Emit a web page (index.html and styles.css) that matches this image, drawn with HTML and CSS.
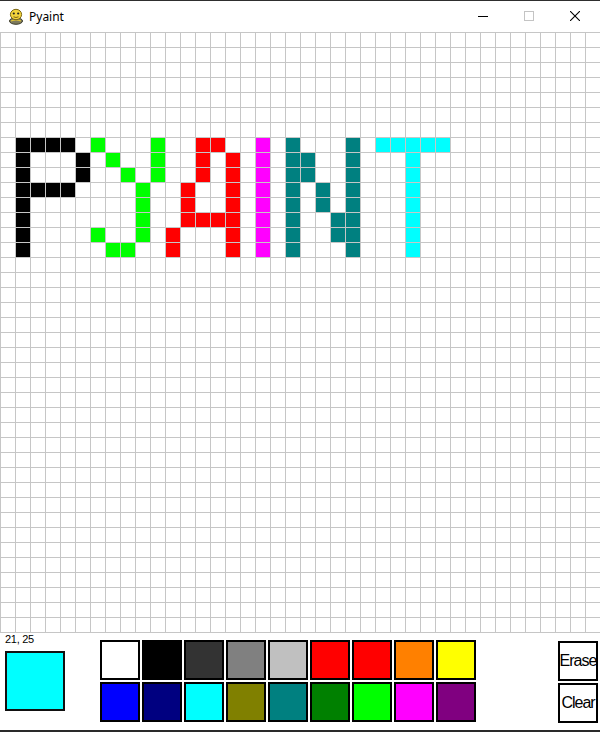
FILE: index.html
```html
<!DOCTYPE html>
<html>
<head>
<meta charset="utf-8">
<title>Pyaint</title>
<link rel="stylesheet" href="styles.css">
</head>
<body>
<div class="window">
  <div class="titlebar">
    <svg class="app-icon" width="16" height="17" viewBox="0 0 16 17">
      <ellipse cx="8" cy="13" rx="6.5" ry="3.3" fill="#7d7a5c" stroke="#3a3a2a" stroke-width="1"/>
      <path d="M3 13 q5 -2 10 0" stroke="#e8c832" stroke-width="1.2" fill="none"/>
      <ellipse cx="8" cy="6.5" rx="5.6" ry="5.2" fill="#f3d43c" stroke="#7a6512" stroke-width="1"/>
      <circle cx="5.8" cy="5.5" r="1.1" fill="#222"/>
      <circle cx="10.2" cy="5.5" r="1.1" fill="#222"/>
      <path d="M5.5 8.8 q2.5 1.4 5 0" stroke="#6b5410" stroke-width="0.9" fill="none"/>
    </svg>
    <span class="title">Pyaint</span>
    <div class="caption">
      <div class="cap-btn">
        <svg width="10" height="10" viewBox="0 0 10 10"><path d="M0 5.5 H10" stroke="#000" stroke-width="1"/></svg>
      </div>
      <div class="cap-btn">
        <svg width="10" height="10" viewBox="0 0 10 10"><rect x="0.5" y="0.5" width="9" height="9" fill="none" stroke="#c4c4c4" stroke-width="1"/></svg>
      </div>
      <div class="cap-btn">
        <svg width="10" height="10" viewBox="0 0 10 10"><path d="M0 0 L10 10 M10 0 L0 10" stroke="#000" stroke-width="1.1"/></svg>
      </div>
    </div>
  </div>

  <div class="canvas" id="canvas"></div>

  <div class="panel">
    <div class="current">
      <div class="coords">21, 25</div>
      <div class="current-swatch"></div>
    </div>
    <div class="palette">
      <div class="sw sw-white"></div>
      <div class="sw sw-black"></div>
      <div class="sw sw-dgray"></div>
      <div class="sw sw-gray"></div>
      <div class="sw sw-silver"></div>
      <div class="sw sw-red"></div>
      <div class="sw sw-red"></div>
      <div class="sw sw-orange"></div>
      <div class="sw sw-yellow"></div>
      <div class="sw sw-blue"></div>
      <div class="sw sw-navy"></div>
      <div class="sw sw-cyan"></div>
      <div class="sw sw-olive"></div>
      <div class="sw sw-teal"></div>
      <div class="sw sw-green"></div>
      <div class="sw sw-lime"></div>
      <div class="sw sw-magenta"></div>
      <div class="sw sw-purple"></div>
    </div>
    <div class="tools">
      <div class="tool">Erase</div>
      <div class="tool">Clear</div>
    </div>
  </div>
</div>
<script src="script.js"></script>
</body>
</html>
```

FILE: styles.css
```css
* { box-sizing: border-box; }

html, body {
  margin: 0;
  padding: 0;
  background: #ffffff;
}

.window {
  width: 600px;
  height: 732px;
  overflow: hidden;
  background: #ffffff;
  font-family: "Liberation Sans", Arial, sans-serif;
}

.titlebar {
  height: 32px;
  border-top: 1px solid #2e2e2e;
  display: flex;
  align-items: center;
  padding-left: 8px;
  background: #ffffff;
}

.app-icon {
  display: block;
  margin-top: -1px;
}

.title {
  margin-left: 5px;
  font-family: "Noto Sans", "Open Sans", sans-serif;
  font-size: 12px;
  color: #000;
  margin-top: -1px;
}

.caption {
  margin-left: auto;
  display: flex;
  height: 31px;
  padding-right: 2px;
}

.cap-btn {
  width: 46px;
  height: 31px;
  display: flex;
  align-items: center;
  justify-content: center;
  padding-bottom: 2px;
}

.canvas {
  display: grid;
  grid-template-columns: repeat(40, 15px);
  grid-template-rows: repeat(40, 15px);
  width: 600px;
  height: 601px;
  border-bottom: 1px solid #c6c6c6;
}

.cell {
  border-top: 1px solid #c6c6c6;
  border-left: 1px solid #c6c6c6;
  background: #ffffff;
}

.cell.k { background: #000000; }
.cell.g { background: #00ff00; }
.cell.r { background: #ff0000; }
.cell.m { background: #ff00ff; }
.cell.t { background: #008080; }
.cell.c { background: #00ffff; }

.panel {
  height: 99px;
  border-bottom: 2px solid #2a2a2a;
  display: flex;
  align-items: flex-start;
  padding-left: 5px;
  padding-right: 2px;
}

.current {
  width: 60px;
  display: flex;
  flex-direction: column;
}

.coords {
  font-size: 11px;
  line-height: 12px;
  letter-spacing: -0.3px;
  color: #000;
  height: 12px;
  white-space: nowrap;
}

.current-swatch {
  margin-top: 6px;
  width: 60px;
  height: 60px;
  border: 2px solid #111;
  background: #00ffff;
}

.palette {
  margin-left: 35px;
  margin-top: 7px;
  display: grid;
  grid-template-columns: repeat(9, 40px);
  grid-template-rows: repeat(2, 40px);
  gap: 2px;
}

.sw {
  border: 2px solid #000;
}

.sw-white { background: #ffffff; }
.sw-black { background: #000000; }
.sw-dgray { background: #333333; }
.sw-gray { background: #808080; }
.sw-silver { background: #c0c0c0; }
.sw-red { background: #ff0000; }
.sw-orange { background: #ff8000; }
.sw-yellow { background: #ffff00; }
.sw-blue { background: #0000ff; }
.sw-navy { background: #000080; }
.sw-cyan { background: #00ffff; }
.sw-olive { background: #808000; }
.sw-teal { background: #008080; }
.sw-green { background: #008000; }
.sw-lime { background: #00ff00; }
.sw-magenta { background: #ff00ff; }
.sw-purple { background: #800080; }

.tools {
  margin-left: auto;
  margin-top: 8px;
  display: flex;
  flex-direction: column;
  gap: 2px;
}

.tool {
  width: 40px;
  height: 40px;
  border: 2px solid #000;
  background: #fff;
  display: flex;
  align-items: center;
  justify-content: center;
  font-size: 16px;
  letter-spacing: -1px;
  color: #000;
  white-space: nowrap;
  overflow: visible;
  padding-bottom: 1px;
}
```

FILE: script.js
```js
(function () {
  var art = {
    7:  ".kkkk.g...g..rr..m.t...t.ccccc",
    8:  ".k...k.g..g..r.r.m.tt..t...c..",
    9:  ".k...k..g.g..r.r.m.tt..t...c..",
    10: ".kkkk....g..r..r.m.t.t.t...c..",
    11: ".k.......g..r..r.m.t.t.t...c..",
    12: ".k.......g..rrrr.m.t..tt...c..",
    13: ".k....g..g.r...r.m.t..tt...c..",
    14: ".k.....gg..r...r.m.t...t...c.."
  };
  var canvas = document.getElementById("canvas");
  var frag = document.createDocumentFragment();
  for (var r = 0; r < 40; r++) {
    var line = art[r] || "";
    for (var c = 0; c < 40; c++) {
      var d = document.createElement("div");
      d.className = "cell";
      var ch = line.charAt(c);
      if (ch && ch !== ".") d.className += " " + ch;
      frag.appendChild(d);
    }
  }
  canvas.appendChild(frag);
})();
```
